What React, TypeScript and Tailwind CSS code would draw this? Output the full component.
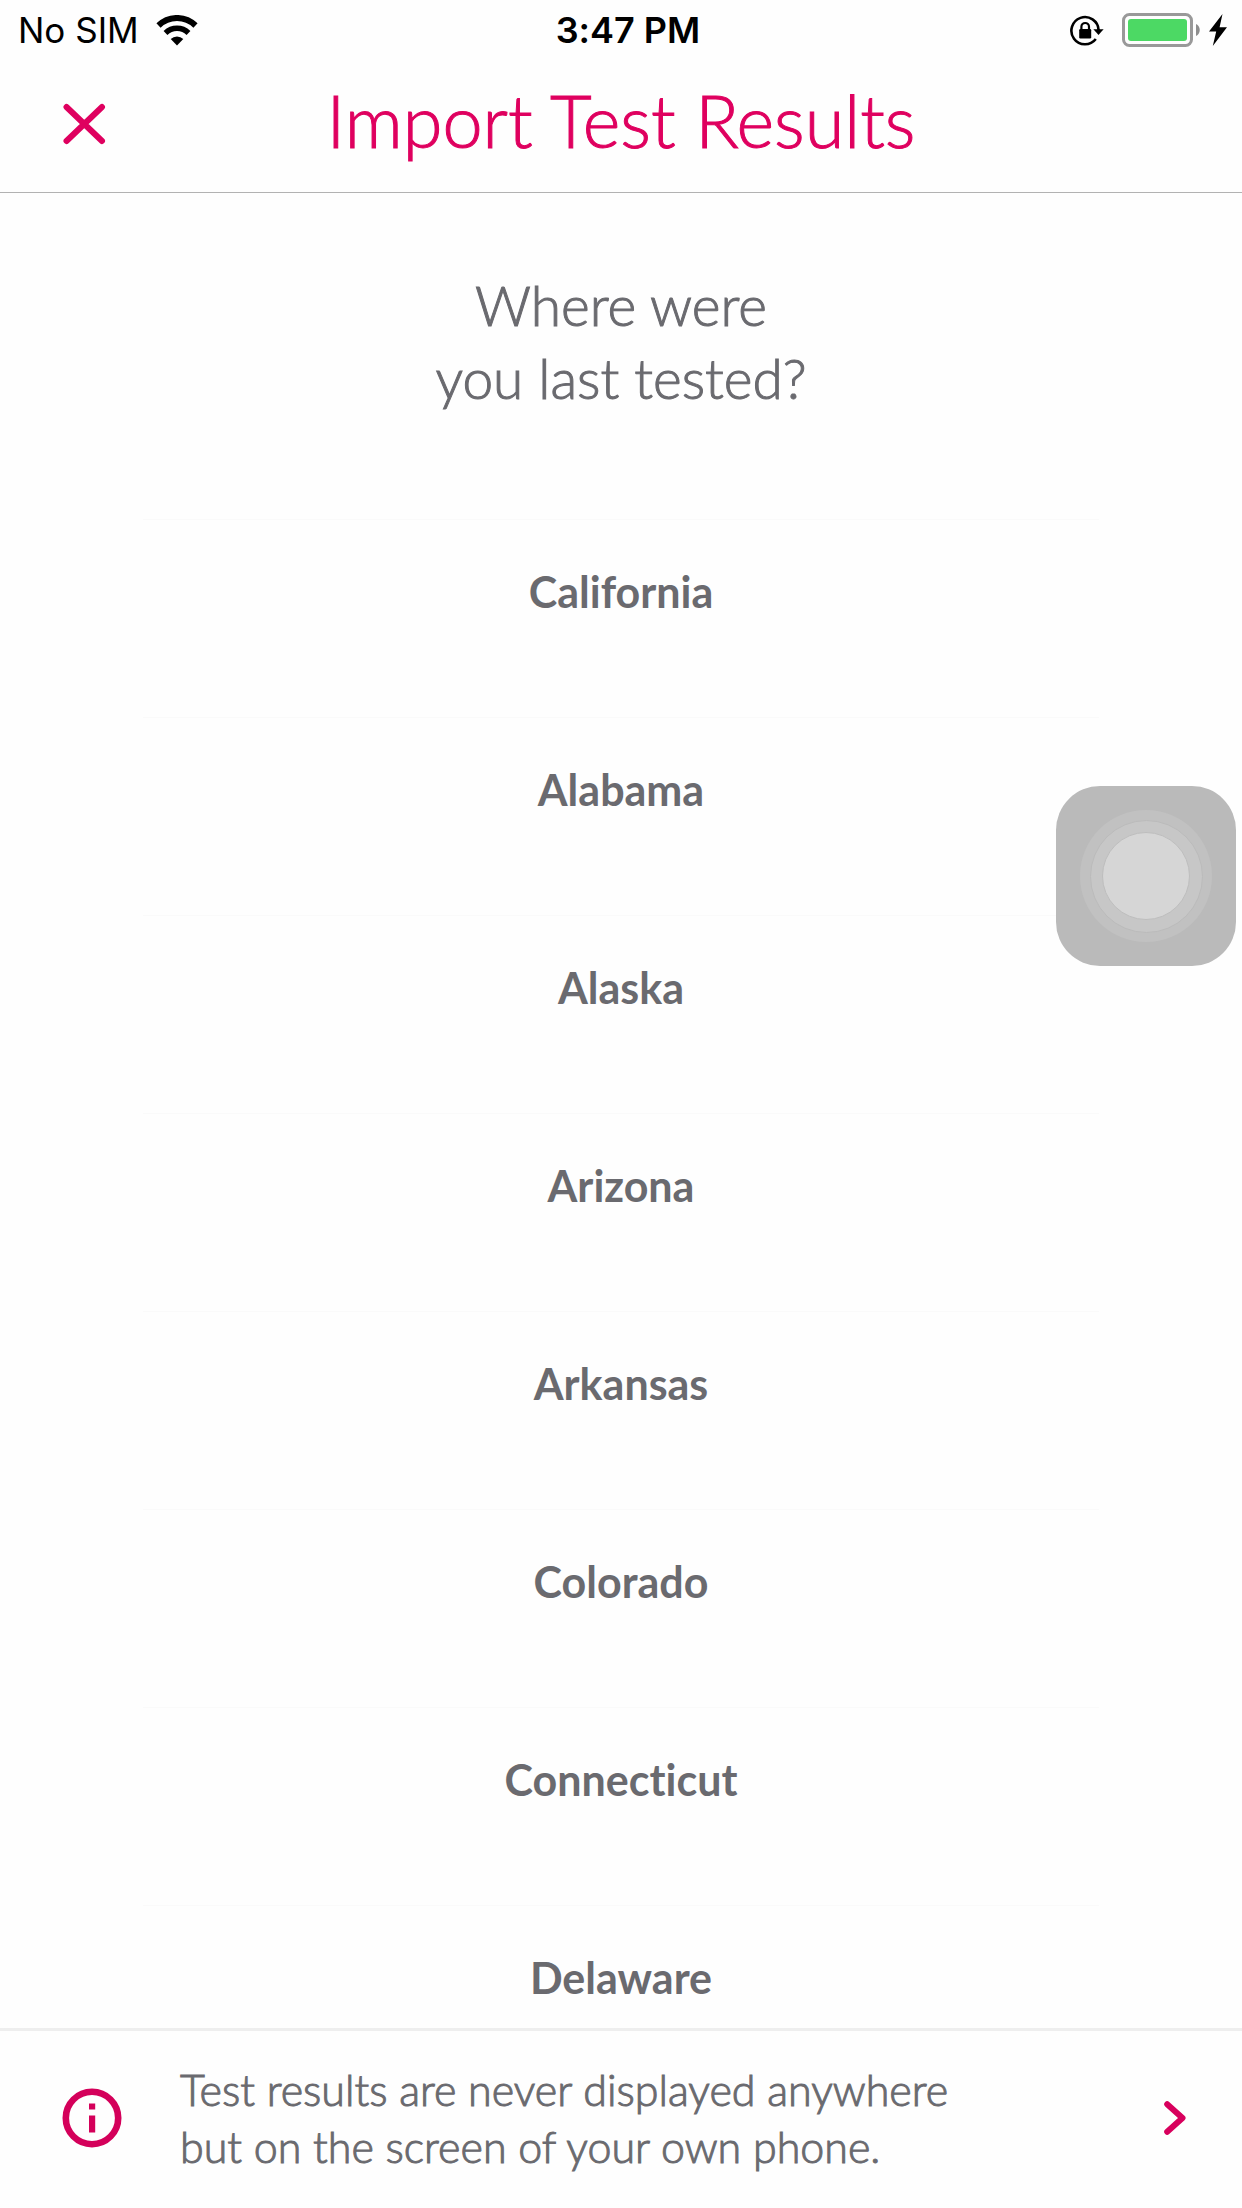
const states = ['California', 'Alabama', 'Alaska', 'Arizona', 'Arkansas', 'Colorado', 'Connecticut', 'Delaware'];

function WifiIcon() {
  return (
    <svg className="h-[31px] w-[42px]" viewBox="0 0 42 31" fill="none" aria-label="Wi-Fi">
      <path d="M2.5 10.5a26.5 26.5 0 0 1 37 0" stroke="#000" strokeWidth="6" />
      <path d="M9.5 18a16.5 16.5 0 0 1 23 0" stroke="#000" strokeWidth="5.5" />
      <path d="M21 30.5l-6.3-6.4a9 9 0 0 1 12.6 0z" fill="#000" />
    </svg>
  );
}

function RotationLockIcon() {
  return (
    <svg className="h-[31px] w-[34px]" viewBox="0 0 34 31" fill="none" aria-label="Rotation locked">
      <path d="M25.8 24A13.6 13.6 0 1 1 28.6 15" stroke="#000" strokeWidth="2.6" />
      <path d="M23.4 14.2h10.2L28.5 20z" fill="#000" />
      <rect x="9.2" y="14" width="12" height="9.4" rx="1.2" fill="#000" />
      <path d="M11.4 15v-3.2a3.8 3.8 0 0 1 7.6 0V15" stroke="#000" strokeWidth="2.2" />
    </svg>
  );
}

function BatteryIcon() {
  return (
    <svg className="h-[34px] w-[78px]" viewBox="0 0 78 34" fill="none" aria-label="Battery charging">
      <rect x="1.5" y="1.5" width="68" height="31" rx="6" stroke="#999" strokeWidth="3" />
      <rect x="6" y="6" width="59" height="22" rx="3" fill="#4cd964" />
      <path d="M74 11c5 2 5 10 0 12z" fill="#8e8e8e" />
    </svg>
  );
}

function BoltIcon() {
  return (
    <svg className="h-8 w-[18px]" viewBox="0 0 18 32" aria-label="Charging">
      <path d="M13.5 0L0 17.5h7.2L3.8 32 18 13.2h-7.4z" fill="#000" />
    </svg>
  );
}

function StatusBar() {
  return (
    <div className="grid h-15 shrink-0 grid-cols-3 items-center pr-1 pl-[18px] font-['Inter',sans-serif] text-[35px] leading-[60px] text-black">
      <div className="flex items-center gap-[17px]">
        <span>No SIM</span>
        <WifiIcon />
      </div>
      <div className="text-center text-[36px] font-semibold">3:47 PM</div>
      <div className="flex items-center justify-end gap-[9px] pr-[11px]">
        <RotationLockIcon />
        <span className="ml-[9px]">
          <BatteryIcon />
        </span>
        <BoltIcon />
      </div>
    </div>
  );
}

export default function App() {
  return (
    <div className="flex h-screen flex-col overflow-hidden bg-[#fefefe] font-['Lato',sans-serif] text-[#6a6a6f] [font-variant-ligatures:none]">
      <StatusBar />
      <header className="grid h-[133px] shrink-0 grid-cols-[160px_1fr_160px] items-center border-b border-[#b2b2b2] pb-3">
        <button type="button" aria-label="Close" className="mt-2 ml-[62px] size-11 justify-self-start">
          <svg className="size-11" viewBox="0 0 44 44" fill="none">
            <path d="M4.5 5L40 39M40 5L4.5 39" stroke="#df005f" strokeWidth="6" strokeLinecap="round" />
          </svg>
        </button>
        <h1 className="text-center text-[72px] leading-[84px] font-light text-[#df005f] [-webkit-text-stroke:1px]">
          Import Test Results
        </h1>
      </header>
      <main className="min-h-0 flex-1 overflow-hidden">
        <h2 className="mt-[76px] text-center text-[55px] leading-[73px] font-light [-webkit-text-stroke:1px]">
          Where were
          <br />
          you last tested?
        </h2>
        <ul className="mx-auto mt-[104px] w-[77%]">
          {states.map((name) => (
            <li key={name} className="h-[198px] border-t border-[#fafafa]">
              <button type="button" className="h-[145px] w-full text-[43px] font-bold">
                {name}
              </button>
            </li>
          ))}
        </ul>
      </main>
      <footer className="shrink-0 border-t-[3px] border-[#eee]">
        <button type="button" className="flex w-full items-center pt-[30px] pr-[56px] pb-[33px] pl-[62px] text-left">
          <svg className="size-[60px] shrink-0" viewBox="0 0 60 60" fill="none" aria-hidden="true">
            <circle cx="30" cy="30" r="26.2" stroke="#d4005a" strokeWidth="6.6" />
            <path d="M27 15.5h6.2v6H27zM27 27.5h6.2v17H27z" fill="#d4005a" />
          </svg>
          <span className="ml-[58px] flex-1 text-[43px] leading-[57px] font-light [-webkit-text-stroke:1px]">
            Test results are never displayed anywhere
            <br />
            but on the screen of your own phone.
          </span>
          <svg className="h-[34px] w-[22px] shrink-0" viewBox="0 0 22 34" fill="none" aria-hidden="true">
            <path d="M3.2 3.2L18.5 17 3.2 30.8" stroke="#d8005d" strokeWidth="6" strokeLinecap="round" strokeLinejoin="round" />
          </svg>
        </button>
      </footer>
      <button
        type="button"
        aria-label="AssistiveTouch"
        className="fixed top-[786px] right-[6px] flex size-[180px] items-center justify-center rounded-[44px] bg-[#bababa]"
      >
        <span className="flex size-[132px] items-center justify-center rounded-full bg-[#c1c1c1]">
          <span className="flex size-[113px] items-center justify-center rounded-full border border-[#bbb] bg-[#c7c7c7]">
            <span className="size-[88px] rounded-full border border-[#bebebe] bg-[#d6d6d6]" />
          </span>
        </span>
      </button>
    </div>
  );
}
